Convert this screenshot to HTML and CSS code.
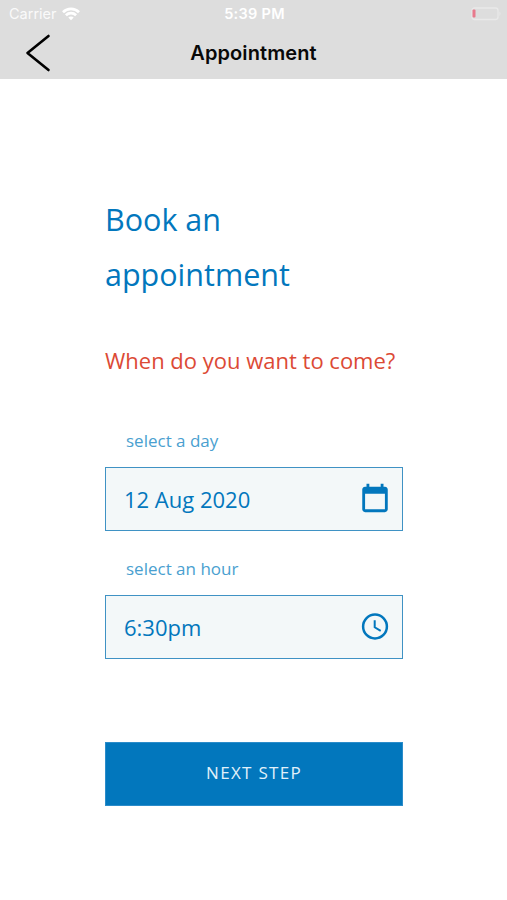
FILE: index.html
```html
<!DOCTYPE html>
<html lang="en">
<head>
<meta charset="utf-8">
<title>Appointment</title>
<link rel="stylesheet" href="styles.css">
</head>
<body>
<header class="top">
  <div class="status">
    <span class="carrier">Carrier
      <svg class="wifi" width="18" height="14" viewBox="0 0 18 14" fill="none" stroke="#fff" stroke-width="2.7"><path d="M1 5.200C5.500.8 12.500.8 17 5.200M3.900 8.300c2.900-2.800 7.300-2.800 10.200 0"/><path d="M9 13.300 6.300 10.600c1.500-1.400 3.900-1.400 5.400 0z" fill="#fff" stroke="none"/></svg>
    </span>
    <time class="clock">5:39 PM</time>
    <svg class="battery" width="35" height="14" viewBox="0 0 35 14"><rect x="1" y="1" width="26" height="11.500" rx="2.500" fill="none" stroke="#e9e9e9" stroke-width="1.300"/><rect x="1.500" y="2.500" width="3" height="8" rx="1" fill="#e8798c"/><path d="M28.500 4.500q2 2.200 0 4.500z" fill="#e9e9e9"/></svg>
  </div>
  <nav class="nav">
    <a class="back" aria-label="Back"><svg width="26" height="38" viewBox="0 0 26 38" fill="none" stroke="#000" stroke-width="2.600" stroke-linecap="round" stroke-linejoin="round"><path d="M23.500 2 2.500 19l21 17"/></svg></a>
    <h1 class="title">Appointment</h1>
  </nav>
</header>
<main class="content">
  <h2 class="heading">Book an appointment</h2>
  <p class="question">When do you want to come?</p>
  <span class="label">select a day</span>
  <div class="field"><span>12 Aug 2020</span>
    <svg width="34" height="34" viewBox="0 0 24 24" fill="#0277bd"><path d="M19 3.300h-1V1.300h-2v2H8v-2H6v2H5c-1.110 0-1.990.9-1.990 2L3 19.300c0 1.100.89 2 2 2h14c1.100 0 2-.9 2-2v-14c0-1.100-.9-2-2-2zm0 16H5v-11h14v11z"/></svg>
  </div>
  <span class="label">select an hour</span>
  <div class="field"><span>6:30pm</span>
    <svg width="34" height="34" viewBox="0 0 34 34" fill="none" stroke="#0277bd"><circle cx="17" cy="16.500" r="11.900" stroke-width="2.500"/><path d="M16.700 10.300v7l6 3.600" stroke-width="2"/></svg>
  </div>
  <button class="next">NEXT STEP</button>
</main>
</body>
</html>
```
FILE: styles.css
```css
* { box-sizing: border-box; margin: 0; }
body { background: #fff; font-family: "Open Sans", sans-serif; color: #0277bd; }
.top { height: 79px; background: #ddd; }
.status {
  display: grid;
  grid-template-columns: 1fr auto 1fr;
  height: 27px;
  align-items: center;
  padding: 0 1px 0 9px;
  color: #fff;
  font: 14.5px/27px Inter, sans-serif;
}
.carrier { display: flex; align-items: center; gap: 5px; color: #fafafa; }
.clock { margin: 0 6px 0 0; font-weight: 600; letter-spacing: .3px; }
.battery { justify-self: end; }
.nav {
  display: grid;
  grid-template-columns: 1fr auto 1fr;
  align-items: center;
  height: 51px;
  padding: 0 24px;
}
.back { display: flex; padding-left: 1px; }
.title { font: 600 20px/50px Inter, sans-serif; color: #080808; letter-spacing: .1px; }
.content { width: 298px; margin: 113px auto 0 105px; }
.heading { font-size: 30.5px; line-height: 55px; font-weight: 400; }
.question {
  margin-top: 42px;
  font-size: 22px;
  line-height: 33px;
  color: #dc4a35;
  white-space: nowrap;
}
.label {
  display: block;
  margin-left: 21px;
  height: 64px;
  font-size: 17px;
  line-height: 76px;
  color: #4a9fd0;
}
.question + .label { margin-top: 39px; height: 51px; line-height: 50px; }
.field {
  display: flex;
  align-items: center;
  justify-content: space-between;
  height: 64px;
  padding: 0 10px 0 18px;
  border: 1.500px solid #3f92c4;
  background: #f3f8f9;
  font-size: 22px;
}
.next {
  display: block;
  width: 298px;
  height: 64px;
  margin-top: 83px;
  padding: 0 0 2px;
  border: 1px solid #2b8cca;
  background: #0277bd;
  color: #e1f1fa;
  font: 17px/60px "Open Sans", sans-serif;
  letter-spacing: 1.300px;
}
```
